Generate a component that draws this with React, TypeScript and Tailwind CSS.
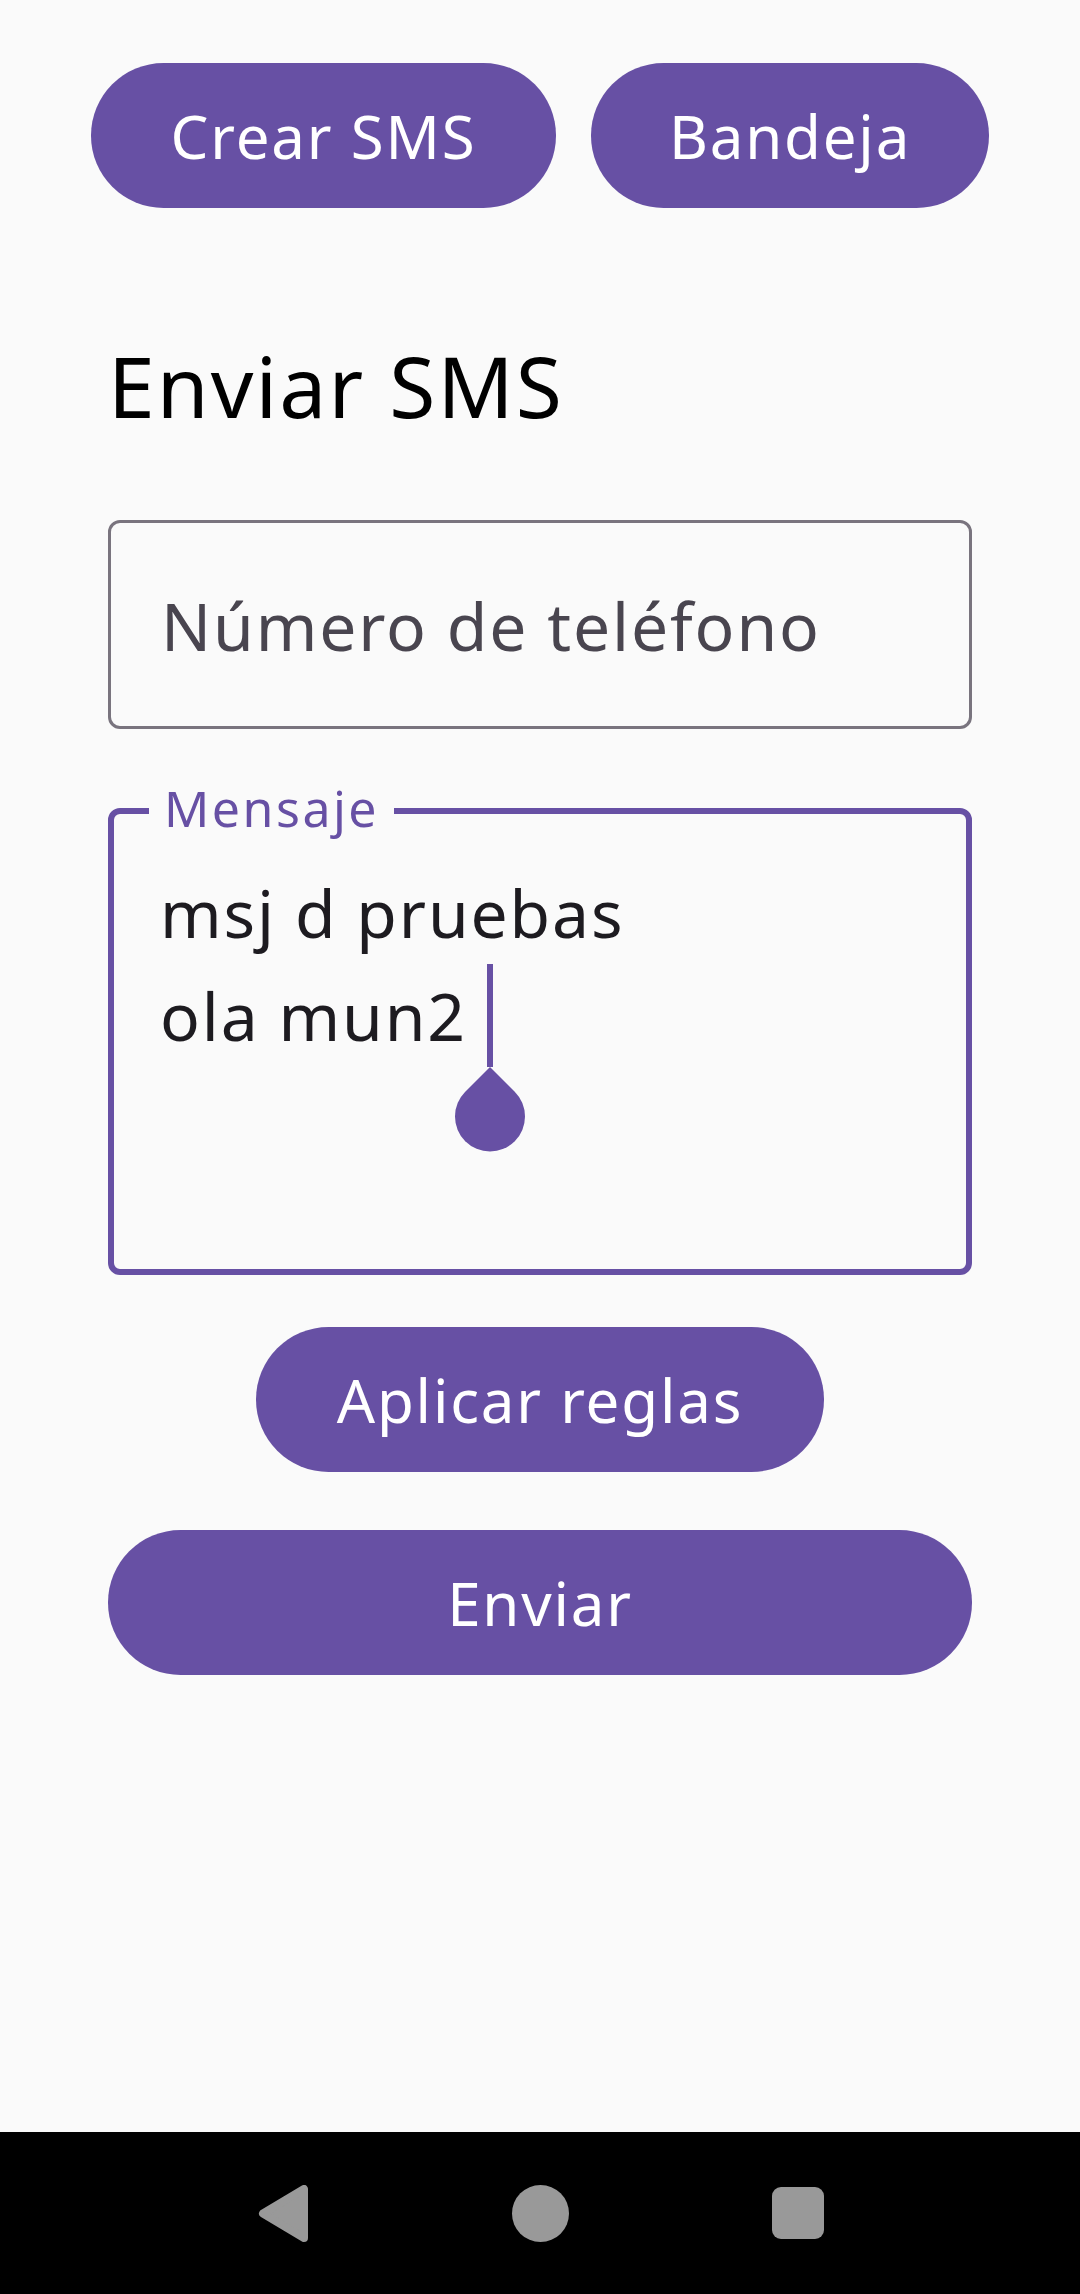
import { ReactNode } from "react";

function PillButton({
  children,
  className = "",
}: {
  children: ReactNode;
  className?: string;
}) {
  return (
    <button
      type="button"
      className={
        "flex h-[145px] items-center justify-center rounded-full bg-[#6750A4] text-[60px] leading-none tracking-[0.03em] text-white " +
        className
      }
    >
      {children}
    </button>
  );
}

function TextHandle() {
  return (
    <svg
      width="70"
      height="85"
      viewBox="0 0 70 85"
      className="absolute left-1/2 top-full -translate-x-1/2"
    >
      <path d="M35 0 L59.75 24.75 A35 35 0 1 1 10.25 24.75 Z" fill="#6750A4" />
    </svg>
  );
}

function NavBar() {
  return (
    <div className="flex h-[162px] items-center justify-center gap-[203px] bg-black">
      <svg width="52" height="57" viewBox="0 0 52 57">
        <polygon
          points="6,28.5 47,4 47,53"
          fill="#999999"
          stroke="#999999"
          strokeWidth="8"
          strokeLinejoin="round"
        />
      </svg>
      <div className="h-[57px] w-[57px] rounded-full bg-[#999999]" />
      <div className="h-[52px] w-[52px] rounded-[9px] bg-[#999999]" />
    </div>
  );
}

export default function App() {
  return (
    <div className="flex h-[2294px] w-[1080px] flex-col bg-[#fafafa] font-['Noto_Sans',sans-serif]">
      <div className="flex-1">
        <div className="flex justify-center gap-[35px] pt-[63px]">
          <PillButton className="w-[465px]">Crear SMS</PillButton>
          <PillButton className="w-[398px]">Bandeja</PillButton>
        </div>

        <div className="flex flex-col px-[108px]">
          <h1 className="mt-[136px] text-[84px] font-normal leading-none tracking-[0.025em] text-black">
            Enviar SMS
          </h1>

          <div className="mt-[92px] flex h-[209px] items-center rounded-[12px] border-[3px] border-[#79747E] pl-[50px]">
            <span className="text-[66px] leading-none tracking-[0.028em] text-[#49454F]">
              Número de teléfono
            </span>
          </div>

          <div className="relative mt-[79px] h-[467px] rounded-[12px] border-[6px] border-[#6750A4] pl-[46px] pt-[47px]">
            <span className="absolute left-[35px] top-[-31px] bg-[#fafafa] px-[15px] text-[50px] leading-none tracking-[0.05em] text-[#6750A4]">
              Mensaje
            </span>
            <div className="text-[66px] leading-[103px] tracking-[0.028em] text-[#1D1B20]">
              <div>msj d pruebas</div>
              <div>
                ola mun2
                <span className="relative ml-[20px] inline-block h-[103px] w-[6px] align-top bg-[#6750A4]">
                  <TextHandle />
                </span>
              </div>
            </div>
          </div>

          <PillButton className="mt-[52px] w-[568px] self-center">
            Aplicar reglas
          </PillButton>
          <PillButton className="mt-[58px] w-full">Enviar</PillButton>
        </div>
      </div>

      <NavBar />
    </div>
  );
}
